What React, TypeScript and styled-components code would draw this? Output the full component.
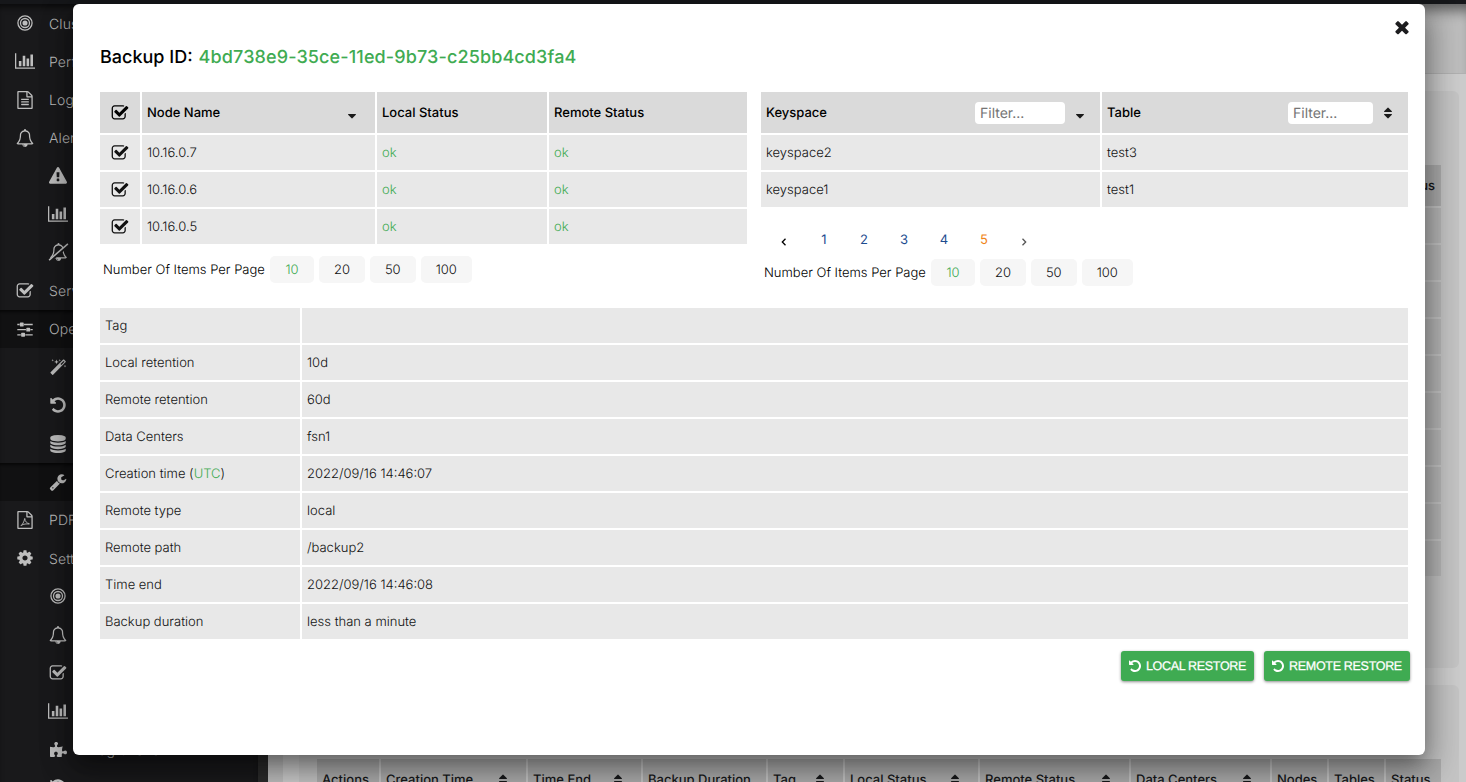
import React from "react";
import styled, { createGlobalStyle } from "styled-components";
import { FaPuzzlePiece } from "react-icons/fa";

const GlobalStyle = createGlobalStyle`
  * { box-sizing: border-box; }
  html, body { margin: 0; padding: 0; overflow: hidden; }
  body { font-family: Inter, "Liberation Sans", sans-serif; font-size: 13px; color: #000; text-rendering: geometricPrecision; }
  button, input { text-rendering: geometricPrecision; }
`;

/* ---------- icons ---------- */

const Svg = styled.svg<{ $w: number; $h: number }>`
  width: ${(p) => p.$w}px;
  height: ${(p) => p.$h}px;
  display: block;
  flex: none;
  fill: currentColor;
`;

const paths = {
  check:
    "M1472 930v318q0 119-84.5 203.5t-203.5 84.5h-832q-119 0-203.5-84.5t-84.5-203.5v-832q0-119 84.5-203.5t203.5-84.5h832q63 0 117 25 15 7 18 23 3 17-9 29l-49 49q-10 10-23 10-3 0-9-2-23-6-45-6h-832q-66 0-113 47t-47 113v832q0 66 47 113t113 47h832q66 0 113-47t47-113v-254q0-13 9-22l64-64q10-10 23-10 6 0 12 3 20 8 20 29zm231-489l-814 814q-24 24-57 24t-57-24l-430-430q-24-24-24-57t24-57l110-110q24-24 57-24t57 24l263 263 647-647q24-24 57-24t57 24l110 110q24 24 24 57t-24 57z",
  chart:
    "M640 896v512h-256v-512h256zm384-512v1024h-256v-1024h256zm1024 1152v128h-2048v-1536h128v1408h1920zm-640-896v768h-256v-768h256zm384-384v1152h-256v-1152h256z",
  file:
    "M1596 380q28 28 48 76t20 88v1152q0 40-28 68t-68 28h-1344q-40 0-68-28t-28-68v-1600q0-40 28-68t68-28h896q40 0 88 20t76 48zm-444-244v376h376q-10-29-22-41l-313-313q-12-12-41-22zm384 1528v-1024h-416q-40 0-68-28t-28-68v-416h-768v1536h1280zm-1024-864q0-14 9-23t23-9h704q14 0 23 9t9 23v64q0 14-9 23t-23 9h-704q-14 0-23-9t-9-23v-64zm736 224q14 0 23 9t9 23v64q0 14-9 23t-23 9h-704q-14 0-23-9t-9-23v-64q0-14 9-23t23-9h704zm0 256q14 0 23 9t9 23v64q0 14-9 23t-23 9h-704q-14 0-23-9t-9-23v-64q0-14 9-23t23-9h704z",
  blankFile:
    "M1596 380q28 28 48 76t20 88v1152q0 40-28 68t-68 28h-1344q-40 0-68-28t-28-68v-1600q0-40 28-68t68-28h896q40 0 88 20t76 48zm-444-244v376h376q-10-29-22-41l-313-313q-12-12-41-22zm384 1528v-1024h-416q-40 0-68-28t-28-68v-416h-768v1536h1280z",
  bell:
    "M912 1696q0-16-16-16-59 0-101.5-42.5t-42.5-101.5q0-16-16-16t-16 16q0 73 51.5 124.5t124.5 51.5q16 0 16-16zm-666-288h1300q-266-300-266-832 0-51-24-105t-69-103-121.5-80.5-169.5-31.5-169.5 31.5-121.5 80.5-69 103-24 105q0 532-266 832zm1482 0q0 52-38 90t-90 38h-448q0 106-75 181t-181 75-181-75-75-181h-448q-52 0-90-38t-38-90q50-42 91-88t85-119.5 74.5-158.5 50-206 19.5-260q0-152 117-282.5t307-158.5q-8-19-8-39 0-40 28-68t68-28 68 28 28 68q0 20-8 39 190 28 307 158.5t117 282.5q0 139 19.5 260t50 206 74.5 158.5 85 119.5 91 88z",
  warning:
    "M1024 1375v-190q0-14-9.5-23.5t-22.5-9.5h-192q-13 0-22.5 9.5t-9.5 23.5v190q0 14 9.5 23.5t22.5 9.5h192q13 0 22.5-9.5t9.5-23.5zm-2-374l18-459q0-12-10-19-13-11-24-11h-220q-11 0-24 11-10 7-10 21l17 457q0 10 10 16.5t24 6.5h185q14 0 23.5-6.5t10.5-16.5zm-14-934l768 1408q35 63-2 126-17 29-46.5 46t-63.5 17h-1536q-34 0-63.5-17t-46.5-46q-37-63-2-126l768-1408q17-31 47-49t65-18 65 18 47 49z",
  sliders:
    "M480 1408v128h-352v-128h352zm352-128q26 0 45 19t19 45v256q0 26-19 45t-45 19h-256q-26 0-45-19t-19-45v-256q0-26 19-45t45-19h256zm160-384v128h-864v-128h864zm-640-512v128h-224v-128h224zm1312 1024v128h-736v-128h736zm-960-1152q26 0 45 19t19 45v256q0 26-19 45t-45 19h-256q-26 0-45-19t-19-45v-256q0-26 19-45t45-19h256zm640 512q26 0 45 19t19 45v256q0 26-19 45t-45 19h-256q-26 0-45-19t-19-45v-256q0-26 19-45t45-19h256zm320 128v128h-224v-128h224zm0-512v128h-864v-128h864z",
  undo:
    "M1664 896q0 156-61 298t-164 245-245 164-298 61q-172 0-327-72.5t-264-204.5q-7-10-6.5-22.5t8.5-20.5l137-138q10-9 25-9 16 2 23 12 73 95 179 147t225 52q104 0 198.5-40.5t163.5-109.5 109.5-163.5 40.5-198.5-40.5-198.5-109.5-163.5-163.5-109.5-198.5-40.5q-98 0-188 35.5t-160 101.5l137 138q31 30 14 69-17 40-59 40h-448q-26 0-45-19t-19-45v-448q0-42 40-59 39-17 69 14l130 129q107-101 244.5-156.5t284.5-55.5q156 0 298 61t245 164 164 245 61 298z",
  database:
    "M896 768q237 0 443-43t325-127v170q0 69-103 128t-280 93.5-385 34.5-385-34.5-280-93.5-103-128v-170q119 84 325 127t443 43zm0 768q237 0 443-43t325-127v170q0 69-103 128t-280 93.5-385 34.5-385-34.5-280-93.5-103-128v-170q119 84 325 127t443 43zm0-384q237 0 443-43t325-127v170q0 69-103 128t-280 93.5-385 34.5-385-34.5-280-93.5-103-128v-170q119 84 325 127t443 43zm0-1152q208 0 385 34.5t280 93.5 103 128v128q0 69-103 128t-280 93.5-385 34.5-385-34.5-280-93.5-103-128v-128q0-69 103-128t280-93.5 385-34.5z",
  wrench:
    "M448 1472q0-26-19-45t-45-19-45 19-19 45 19 45 45 19 45-19 19-45zm644-420l-682 682q-37 37-90 37-52 0-91-37l-106-108q-38-36-38-90 0-53 38-91l681-681q39 98 114.5 173.5t173.5 114.5zm634-435q0 39-23 106-47 134-164.5 217.5t-258.5 83.5q-185 0-316.5-131.5t-131.5-316.5 131.5-316.5 316.5-131.5q58 0 121.5 16.5t107.5 46.5q16 11 16 28t-16 28l-293 169v224l193 107q5-3 79-48.5t135.5-81 70.5-35.5q15 0 23.5 10t8.5 25z",
  cog:
    "M1152 896q0-106-75-181t-181-75-181 75-75 181 75 181 181 75 181-75 75-181zm512-109v222q0 12-8 23t-20 13l-185 28q-19 54-39 91 35 50 107 138 10 12 10 25t-9 23q-27 37-99 108t-94 71q-12 0-26-9l-138-108q-44 23-91 38-16 136-29 186-7 28-36 28h-222q-14 0-24.5-8.5t-11.5-21.5l-28-184q-49-16-90-37l-141 107q-10 9-25 9-14 0-25-11-126-114-165-168-7-10-7-23 0-12 8-23 15-21 51-66.5t54-70.5q-27-50-41-99l-183-27q-13-2-21-12.5t-8-23.5v-222q0-12 8-23t19-13l186-28q14-46 39-92-40-57-107-138-10-12-10-24 0-10 9-23 26-36 98.5-107.5t94.5-71.5q13 0 26 10l138 107q44-23 91-38 16-136 29-186 7-28 36-28h222q14 0 24.5 8.5t11.5 21.5l28 184q49 16 90 37l142-107q9-9 24-9 13 0 25 10 129 119 165 170 7 8 7 22 0 12-8 23-15 21-51 66.5t-54 70.5q26 50 41 98l183 28q13 2 21 12.5t8 23.5z",
  times:
    "M1490 1322q0 40-28 68l-136 136q-28 28-68 28t-68-28l-294-294-294 294q-28 28-68 28t-68-28l-136-136q-28-28-28-68t28-68l294-294-294-294q-28-28-28-68t28-68l136-136q28-28 68-28t68 28l294 294 294-294q28-28 68-28t68 28l136 136q28 28 28 68t-28 68l-294 294 294 294q28 28 28 68z",
  sortUp:
    "M1408 704q0 26-19 45t-45 19h-896q-26 0-45-19t-19-45 19-45l448-448q19-19 45-19t45 19l448 448q19 19 19 45z",
  sortDown:
    "M1408 1088q0 26-19 45l-448 448q-19 19-45 19t-45-19l-448-448q-19-19-19-45t19-45 45-19h896q26 0 45 19t19 45z",
};

type Glyph = keyof typeof paths;

const Icon = ({ name, size = 18 }: { name: Glyph; size?: number }) => {
  const wide = name === "chart";
  return (
    <Svg $w={wide ? (size * 2048) / 1792 : size} $h={size} viewBox={wide ? "0 0 2048 1792" : "0 0 1792 1792"}>
      <path d={paths[name]} />
    </Svg>
  );
};

const Bullseye = () => (
  <Svg $w={18} $h={18} viewBox="0 0 1792 1792">
    <circle cx="896" cy="896" r="256" />
    <g fill="none" stroke="currentColor" strokeWidth="128">
      <circle cx="896" cy="896" r="448" />
      <circle cx="896" cy="896" r="704" />
    </g>
  </Svg>
);

const BellSlash = () => (
  <Svg $w={21} $h={18} viewBox="0 0 2048 1792">
    <mask id="slash">
      <rect width="2048" height="1792" fill="#fff" />
      <path d="M40 1640L2060 -60" stroke="#000" strokeWidth="300" transform="translate(50 90)" />
    </mask>
    <path d={paths.bell} transform="translate(128 0)" mask="url(#slash)" />
    <path d="M90 1700L1960 90" stroke="currentColor" strokeWidth="150" />
  </Svg>
);

const PdfFile = () => (
  <Svg $w={18} $h={18} viewBox="0 0 1792 1792">
    <path d={paths.blankFile} />
    <path
      d="M480 1480C620 1380 830 1050 850 800C850 720 900 720 890 800C880 1000 1080 1230 1320 1260C1360 1280 1340 1310 1290 1300C1050 1260 760 1290 520 1430"
      fill="none"
      stroke="currentColor"
      strokeWidth="85"
    />
  </Svg>
);

const Magic = () => (
  <Svg $w={18} $h={18} viewBox="0 0 18 18">
    <path
      fillRule="evenodd"
      d="M14.2 1.6q.4-.4.8 0l1.7 1.7q.4.4 0 .8L4.1 16.7q-.4.4-.8 0L1.600 15q-.4-.4 0-.8zM14.600 2.900L11.500 6l.9.9 3.100-3.100z"
    />
    <path d="M3.700 1l.3 1 1 .3-1 .3-.3 1-.3-1-1-.3 1-.3zM7.500 1.500l.6 1.800 1.800.6-1.800.6-.6 1.800-.6-1.800-1.800-.6 1.800-.6zM10.800 1l.3 1 1 .3-1 .3-.3 1-.3-1-1-.3 1-.3zM16 6.800l.3 1 1 .3-1 .3-.3 1-.3-1-1-.3 1-.3z" />
  </Svg>
);

/* ---------- page behind the dialog ---------- */

const Screen = styled.div`
  position: relative;
  width: 1466px;
  height: 782px;
  overflow: hidden;
  display: flex;
  flex-direction: column;
  background: #17181a;
`;

const TopBar = styled.div`
  height: 4px;
  flex: none;
  background: #16171a;
`;

const Shell = styled.div`
  flex: 1;
  min-height: 0;
  display: flex;
`;

const Sidebar = styled.nav`
  width: 258px;
  flex: none;
  overflow: hidden;
  background: #19191b;
  box-shadow: inset 0 6px 6px -3px rgba(0, 0, 0, 0.6);
`;

const ScrollTrack = styled.div`
  width: 10px;
  flex: none;
  background: #2b2b2b;
`;

const NavItem = styled.div<{ $sub?: boolean; $active?: boolean }>`
  height: 38.22px;
  display: flex;
  align-items: center;
  padding-left: ${(p) => (p.$sub ? 46 : 13)}px;
  color: #bebebe;
  font-size: 14px;
  font-weight: 300;
  letter-spacing: 0.1px;
  background: ${(p) => (p.$active ? "#111112" : "transparent")};
  box-shadow: ${(p) => (p.$active ? "inset 0 3px 3px -1px rgba(0,0,0,0.6)" : "none")};
`;

const NavIcon = styled.span`
  width: 24px;
  display: flex;
  justify-content: center;
  margin-right: 12px;
`;

const NavLabel = styled.span`
  padding-top: 2px;
  white-space: nowrap;
`;

const Main = styled.main`
  flex: 1;
  min-width: 0;
  display: flex;
  flex-direction: column;
  background: #cbcbcb;
  border-left: 15px solid #bdbdbd;
`;

const PageHeader = styled.div`
  height: 70px;
  flex: none;
  background: #bdbdbd;
  border-bottom: 1px solid #b0b0b0;
  box-shadow: inset 0 14px 14px -8px rgba(0, 0, 0, 0.55);
`;

const Card = styled.section<{ $h: number; $pad: number }>`
  height: ${(p) => p.$h}px;
  flex: none;
  margin: 17px 7px 0 16px;
  padding: ${(p) => p.$pad}px 18px 0;
  border-radius: 6px;
  background: #c3c3c3;
  overflow: hidden;
`;

const BackGrid = styled.div`
  display: grid;
  grid-template-columns: 62px 145px 113px 123px 75px 133px 149px 139px 55px 55px 55px;
  gap: 2px;
`;

const BackHead = styled.div<{ $end?: boolean }>`
  height: 41px;
  padding: 0 ${(p) => (p.$end ? 6 : 16)}px 0 5px;
  display: flex;
  align-items: center;
  justify-content: ${(p) => (p.$end ? "flex-end" : "space-between")};
  background: #ababab;
  color: #17181a;
  font-weight: 500;
  white-space: nowrap;
`;

const BackCell = styled.div`
  height: 35px;
  background: #b6b6b6;
`;

/* ---------- dialog ---------- */

const Dialog = styled.div`
  position: absolute;
  left: 73px;
  top: 4px;
  width: 1352px;
  height: 751px;
  padding: 0 17px 0 27px;
  border-radius: 6px;
  background: #fff;
  box-shadow: 0 11px 15px -7px rgba(0, 0, 0, 0.2), 0 15px 30px 3px rgba(0, 0, 0, 0.25), 0 4px 30px 6px rgba(0, 0, 0, 0.2);
`;

const CloseRow = styled.div`
  height: 37px;
  display: flex;
  justify-content: flex-end;
  padding: 13px 0 0;
  margin-right: -4px;
  color: #1d1d1f;
`;

const Title = styled.h1`
  margin: 0;
  height: 51px;
  font-size: 18px;
  line-height: 34px;
  font-weight: 500;
  display: flex;
  gap: 6px;
`;

const Green = styled.span`
  color: #3fab52;
`;

const BackupId = styled(Green)`
  letter-spacing: 0.12px;
`;

const Columns = styled.div`
  display: grid;
  grid-template-columns: 647px 647px;
  gap: 14px;
  height: 216px;
`;

const Grid = styled.div<{ $cols: string }>`
  display: grid;
  grid-template-columns: ${(p) => p.$cols};
  gap: 2px;
`;

const HeadCell = styled.div<{ $center?: boolean }>`
  height: 41px;
  padding: 0 5px;
  display: flex;
  align-items: center;
  justify-content: ${(p) => (p.$center ? "center" : "flex-start")};
  background: #dadada;
  font-weight: 500;
`;

const Cell = styled.div<{ $center?: boolean; $ok?: boolean }>`
  height: 35px;
  padding: 0 5px;
  display: flex;
  align-items: center;
  justify-content: ${(p) => (p.$center ? "center" : "flex-start")};
  background: #e8e8e8;
  color: ${(p) => (p.$ok ? "#3fab52" : "#111")};
  font-weight: 300;
  white-space: pre;
`;

const Filter = styled.input<{ $w: number }>`
  width: ${(p) => p.$w}px;
  height: 22px;
  margin-left: auto;
  padding: 1px 5px 0;
  border: 0;
  border-radius: 4px;
  background: #fff;
  font: 400 14px Inter, sans-serif;
  &::placeholder { color: #757575; }
`;

const SortBox = styled.span<{ $gap: string; $right: number }>`
  margin-left: ${(p) => p.$gap};
  margin-right: ${(p) => p.$right}px;
  color: #1a1a1a;
`;

const SortStack = styled.svg`
  display: block;
  fill: currentColor;
`;

const Sort = ({ up = true }: { up?: boolean }) => (
  <SortStack width="14" height="14" viewBox="0 0 1792 1792">
    {up && <path d={paths.sortUp} />}
    <path d={paths.sortDown} />
  </SortStack>
);

const PerPage = styled.div<{ $top: number }>`
  display: flex;
  align-items: center;
  gap: 5px;
  margin-top: ${(p) => p.$top}px;
  padding-left: 3px;
`;

const PerLabel = styled.span`
  font-weight: 300;
  width: 162px;
  padding-top: 1px;
  white-space: nowrap;
`;

const SizeButton = styled.button<{ $w: number; $on?: boolean }>`
  width: ${(p) => p.$w}px;
  height: 27px;
  padding: 1px 0 0;
  border: 0;
  border-radius: 5px;
  background: #f6f6f6;
  color: ${(p) => (p.$on ? "#3fab52" : "#111")};
  font: 350 13px Inter, sans-serif;
`;

const Pager = styled.div`
  display: grid;
  grid-template-columns: repeat(7, 40px);
  height: 20px;
  margin-top: 22px;
  padding-left: 3px;
  align-items: center;
  justify-items: center;
`;

const PageLink = styled.span<{ $on?: boolean }>`
  padding-top: 2px;
  color: ${(p) => (p.$on ? "#f08519" : "#1d4c8f")};
`;

const Chevron = styled.svg<{ $dim?: boolean }>`
  width: 6px;
  height: 8px;
  margin-top: 5px;
  fill: none;
  stroke: ${(p) => (p.$dim ? "#555" : "#000")};
  stroke-width: 1.3;
`;

const Actions = styled.div`
  display: flex;
  justify-content: flex-end;
  gap: 10px;
  margin: 12px -2px 0 0;
`;

const RestoreButton = styled.button<{ $w: number }>`
  width: ${(p) => p.$w}px;
  height: 30px;
  padding: 0 1px 1px 0;
  display: flex;
  align-items: center;
  justify-content: center;
  gap: 4px;
  border: 0;
  border-radius: 3px;
  background: #3fab52;
  color: #fff;
  font: 400 12.5px "Liberation Sans", Arial, sans-serif;
  letter-spacing: -0.31px;
  -webkit-text-stroke: 0.25px #fff;
  white-space: nowrap;
  box-shadow: 0 1px 3px rgba(0, 0, 0, 0.45);
`;

/* ---------- data ---------- */

const nav: { icon: React.ReactNode; label?: string; sub?: boolean; active?: boolean }[] = [
  { icon: <Bullseye />, label: "Cluster" },
  { icon: <Icon name="chart" />, label: "Performance" },
  { icon: <Icon name="file" />, label: "Logs" },
  { icon: <Icon name="bell" />, label: "Alerts" },
  { icon: <Icon name="warning" />, sub: true },
  { icon: <Icon name="chart" />, sub: true },
  { icon: <BellSlash />, sub: true },
  { icon: <Icon name="check" />, label: "Services" },
  { icon: <Icon name="sliders" />, label: "Operations", active: true },
  { icon: <Magic />, sub: true },
  { icon: <Icon name="undo" />, sub: true },
  { icon: <Icon name="database" />, sub: true },
  { icon: <Icon name="wrench" />, sub: true, active: true },
  { icon: <PdfFile />, label: "PDF Report" },
  { icon: <Icon name="cog" />, label: "Settings" },
  { icon: <Bullseye />, sub: true },
  { icon: <Icon name="bell" />, sub: true },
  { icon: <Icon name="check" />, sub: true },
  { icon: <Icon name="chart" />, sub: true },
  { icon: <FaPuzzlePiece size={17} />, label: "Integrations", sub: true },
  { icon: <Icon name="undo" />, sub: true },
];

const backColumns: [string, boolean][] = [
  ["Actions", false],
  ["Creation Time", true],
  ["Time End", true],
  ["Backup Duration", false],
  ["Tag", true],
  ["Local Status", true],
  ["Remote Status", true],
  ["Data Centers", true],
  ["Nodes", false],
  ["Tables", false],
  ["Status", false],
];

const nodes = ["10.16.0.7", "10.16.0.6", "10.16.0.5"];
const tables = [
  ["keyspace2", "test3"],
  ["keyspace1", "test1"],
];

const details: [React.ReactNode, string][] = [
  ["Tag", ""],
  ["Local retention", "10d"],
  ["Remote retention", "60d"],
  ["Data Centers", "fsn1"],
  [<>Creation time (<Green>UTC</Green>)</>, "2022/09/16 14:46:07"],
  ["Remote type", "local"],
  ["Remote path", "/backup2"],
  ["Time end", "2022/09/16 14:46:08"],
  ["Backup duration", "less than a minute"],
];

const BackTable = ({ rows, covered }: { rows: number; covered?: boolean }) => (
  <BackGrid>
    {backColumns.map(([label, sortable], i) => (
      <BackHead key={label} $end={covered}>
        {(!covered || i === backColumns.length - 1) && label}
        {sortable && !covered && <Sort />}
      </BackHead>
    ))}
    {Array.from({ length: rows * backColumns.length }, (_, i) => (
      <BackCell key={i} />
    ))}
  </BackGrid>
);

const ItemsPerPage = ({ top }: { top: number }) => (
  <PerPage $top={top}>
    <PerLabel>Number Of Items Per Page</PerLabel>
    <SizeButton $w={44} $on>10</SizeButton>
    <SizeButton $w={46}>20</SizeButton>
    <SizeButton $w={45.5}>50</SizeButton>
    <SizeButton $w={51.5}>100</SizeButton>
  </PerPage>
);

export default function App() {
  return (
    <Screen>
      <GlobalStyle />
      <TopBar />
      <Shell>
        <Sidebar>
          {nav.map((item, i) => (
            <NavItem key={i} $sub={item.sub} $active={item.active}>
              <NavIcon>{item.icon}</NavIcon>
              {item.label && <NavLabel>{item.label}</NavLabel>}
            </NavItem>
          ))}
        </Sidebar>
        <ScrollTrack />
        <Main>
          <PageHeader />
          <Card $h={577} $pad={74}>
            <BackTable rows={10} covered />
          </Card>
          <Card $h={200} $pad={74}>
            <BackTable rows={1} />
          </Card>
        </Main>
      </Shell>

      <Dialog role="dialog">
        <CloseRow>
          <Icon name="times" size={20} />
        </CloseRow>
        <Title>
          <span>Backup ID:</span>
          <BackupId>4bd738e9-35ce-11ed-9b73-c25bb4cd3fa4</BackupId>
        </Title>
        <Columns>
          <div>
            <Grid $cols="40px 233px 170px 198px">
              <HeadCell $center><Icon name="check" /></HeadCell>
              <HeadCell>
                Node Name
                <SortBox $gap="auto" $right={11}><Sort up={false} /></SortBox>
              </HeadCell>
              <HeadCell>Local Status</HeadCell>
              <HeadCell>Remote Status</HeadCell>
              {nodes.map((n) => (
                <React.Fragment key={n}>
                  <Cell $center><Icon name="check" /></Cell>
                  <Cell>{n}</Cell>
                  <Cell $ok>ok</Cell>
                  <Cell $ok>ok</Cell>
                </React.Fragment>
              ))}
            </Grid>
            <ItemsPerPage top={12} />
          </div>
          <div>
            <Grid $cols="339px 306px">
              <HeadCell>
                Keyspace
                <Filter $w={90} placeholder="Filter..." />
                <SortBox $gap="8px" $right={8}><Sort up={false} /></SortBox>
              </HeadCell>
              <HeadCell>
                Table
                <Filter $w={85} placeholder="Filter..." />
                <SortBox $gap="8px" $right={8}><Sort /></SortBox>
              </HeadCell>
              {tables.map(([k, t]) => (
                <React.Fragment key={k}>
                  <Cell>{k}</Cell>
                  <Cell>{t}</Cell>
                </React.Fragment>
              ))}
            </Grid>
            <Pager>
              <Chevron viewBox="0 0 6 8"><path d="M4.500 .7L1.300 4l3.200 3.300" /></Chevron>
              {[1, 2, 3, 4, 5].map((n) => (
                <PageLink key={n} $on={n === 5}>{n}</PageLink>
              ))}
              <Chevron $dim viewBox="0 0 6 8"><path d="M1.500 .7L4.700 4L1.500 7.300" /></Chevron>
            </Pager>
            <ItemsPerPage top={10} />
          </div>
        </Columns>
        <Grid $cols="200px 1106px">
          {details.map(([label, value], i) => (
            <React.Fragment key={i}>
              <Cell>{label}</Cell>
              <Cell>{value}</Cell>
            </React.Fragment>
          ))}
        </Grid>
        <Actions>
          <RestoreButton $w={133}><Icon name="undo" size={14} />LOCAL RESTORE</RestoreButton>
          <RestoreButton $w={146}><Icon name="undo" size={14} />REMOTE RESTORE</RestoreButton>
        </Actions>
      </Dialog>
    </Screen>
  );
}
